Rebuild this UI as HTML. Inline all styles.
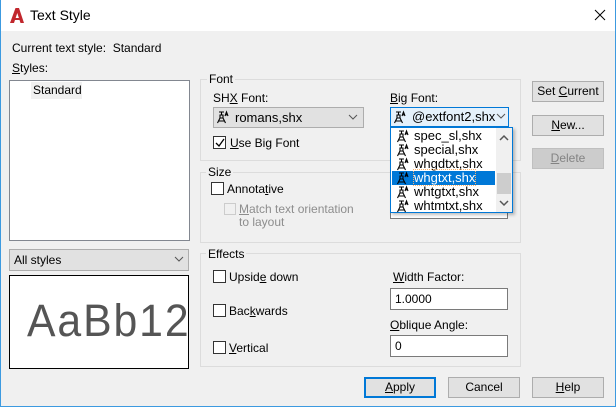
<!DOCTYPE html>
<html><head><style>
*{margin:0;padding:0;box-sizing:border-box}
body{width:616px;height:407px;background:#f0f0f0;font-family:"Liberation Sans",sans-serif;font-size:12px;color:#000;position:relative;overflow:hidden}
.a{position:absolute;white-space:nowrap}
.win{position:absolute;left:0;top:0;width:616px;height:407px;border:1px solid #3c9ae0;border-top:none}
.title{position:absolute;left:0;top:0;width:616px;height:31px;background:#fff}
.grp{position:absolute;border:1px solid #dcdcdc}
.gl{position:absolute;background:#f0f0f0;padding:0 2px;line-height:13px}
.btn{position:absolute;width:72px;height:21px;background:#e1e1e1;border:1px solid #adadad;text-align:center;line-height:19px}
.cb{position:absolute;width:13px;height:13px;border:1px solid #333;background:#fff}
.inp{position:absolute;width:118px;height:22px;border:1px solid #7a7a7a;background:#fff;padding-left:4px;line-height:20px}
.u{text-decoration:underline}
.it{position:absolute;left:1px;width:103px;height:14px;line-height:14px;font-size:13px;padding-left:22px}
.ic{position:absolute;left:4px;top:0}
</style></head><body>
<svg width="0" height="0" style="position:absolute"><defs><g id="ico" fill="none" stroke-width="1.1"><path d="M3 2h5M5.5 2v3M4 5h3v3h-3z M1.5 13l2.5-5M9.5 13l-2.5-5M3 11h5"/><path d="M9 6l1.5-4l1.5 4M9.5 4.8h2"/></g></defs></svg>
<div class="title"></div>
<div class="win"></div>
<svg class="a" style="left:9px;top:7px" width="16" height="17" viewBox="0 0 16 17"><path d="M1 16 L6.5 1 L10 1 L15 16 L11.5 16 L8.3 6 L5 16Z" fill="#c1272d"/><path d="M5.5 12 L11 12" stroke="#c1272d" stroke-width="2"/></svg>
<div class="a" style="left:30px;top:7px;font-size:14px">Text Style</div>
<svg class="a" style="left:594px;top:9px" width="12" height="12"><path d="M1 1L11 11M11 1L1 11" stroke="#000" stroke-width="1"/></svg>

<div class="a" style="left:12px;top:41px">Current text style:&nbsp; Standard</div>
<div class="a" style="left:12px;top:61px"><span class="u">S</span>tyles:</div>
<div class="a" style="left:9px;top:80px;width:181px;height:161px;background:#fff;border:1px solid #828790"></div>
<div class="a" style="left:31px;top:82px;width:51px;height:17px;background:#f0f0f0;line-height:17px;padding-left:2px">Standard</div>
<div class="a" style="left:9px;top:249px;width:180px;height:22px;background:#e1e1e1;border:1px solid #adadad;line-height:20px;padding-left:4px">All styles</div>
<svg class="a" style="left:174px;top:256px" width="10" height="7"><path d="M1 1L5 5L9 1" stroke="#555" fill="none"/></svg>
<div class="a" style="left:9px;top:275px;width:180px;height:94px;background:#fff;border:1px solid #000;overflow:hidden">
<div class="a" style="left:17px;top:19px;font-size:45px;color:#555;letter-spacing:2px;transform:scaleX(0.95);transform-origin:left">AaBb12</div></div>

<div class="grp" style="left:200px;top:79px;width:321px;height:82px"></div>
<div class="gl" style="left:207px;top:73px">Font</div>
<div class="a" style="left:213px;top:91px">SH<span class="u">X</span> Font:</div>
<div class="a" style="left:213px;top:107px;width:151px;height:21px;background:#e1e1e1;border:1px solid #adadad;line-height:19px;padding-left:21px;font-size:13px">romans,shx</div>
<svg class="a" style="left:216px;top:110px" width="14" height="14" stroke="#000"><use href="#ico"/></svg>
<svg class="a" style="left:348px;top:114px" width="10" height="7"><path d="M1 1L5 5L9 1" stroke="#555" fill="none"/></svg>
<div class="cb" style="left:213px;top:136px"></div>
<svg class="a" style="left:214px;top:137px" width="12" height="12"><path d="M2 6L5 9L10 2" stroke="#000" fill="none" stroke-width="1.3"/></svg>
<div class="a" style="left:230px;top:136px"><span class="u">U</span>se Big Font</div>
<div class="a" style="left:390px;top:91px"><span class="u">B</span>ig Font:</div>

<div class="grp" style="left:200px;top:172px;width:321px;height:71px"></div>
<div class="gl" style="left:206px;top:166px">Size</div>
<div class="cb" style="left:211px;top:182px"></div>
<div class="a" style="left:227px;top:182px">Annota<span class="u">t</span>ive</div>
<div class="a" style="left:224px;top:203px;width:12px;height:12px;border:1px solid #ccc;background:#f0f0f0"></div>
<div class="a" style="left:239px;top:203px;color:#8d8d8d;line-height:13px"><span class="u">M</span>atch text orientation<br>to layout</div>
<div class="inp" style="left:390px;top:198px;height:21px"></div>

<div class="grp" style="left:200px;top:253px;width:321px;height:114px"></div>
<div class="gl" style="left:206px;top:248px">Effects</div>
<div class="cb" style="left:213px;top:270px"></div>
<div class="a" style="left:229px;top:270px">Upsid<span class="u">e</span> down</div>
<div class="cb" style="left:213px;top:304px"></div>
<div class="a" style="left:229px;top:304px">Bac<span class="u">k</span>wards</div>
<div class="cb" style="left:213px;top:341px"></div>
<div class="a" style="left:229px;top:341px"><span class="u">V</span>ertical</div>
<div class="a" style="left:393px;top:270px"><span class="u">W</span>idth Factor:</div>
<div class="inp" style="left:390px;top:288px">1.0000</div>
<div class="a" style="left:390px;top:318px"><span class="u">O</span>blique Angle:</div>
<div class="inp" style="left:390px;top:335px">0</div>

<div class="btn" style="left:532px;top:81px">Set <span class="u">C</span>urrent</div>
<div class="btn" style="left:532px;top:115px"><span class="u">N</span>ew...</div>
<div class="btn" style="left:532px;top:148px;background:#cccccc;border-color:#bfbfbf;color:#838383"><span class="u">D</span>elete</div>
<div class="btn" style="left:364px;top:377px;border:2px solid #0078d7;line-height:17px"><span class="u">A</span>pply</div>
<div class="btn" style="left:448px;top:377px">Cancel</div>
<div class="btn" style="left:532px;top:377px"><span class="u">H</span>elp</div>

<div class="a" style="left:390px;top:107px;width:119px;height:20px;background:#e5f1fb;border:1px solid #0078d7;line-height:18px;padding-left:21px;font-size:13px">@extfont2,shx</div>
<svg class="a" style="left:393px;top:110px" width="14" height="14" stroke="#000"><use href="#ico"/></svg>
<svg class="a" style="left:496px;top:113px" width="10" height="7"><path d="M1 1L5 5L9 1" stroke="#555" fill="none"/></svg>

<div class="a" style="left:390px;top:127px;width:123px;height:86px;background:#fff;border:1px solid #0078d7;box-shadow:2px 2px 3px rgba(0,0,0,.25)">
<div class="it" style="top:1px"><svg class="ic" width="14" height="14" stroke="#000"><use href="#ico"/></svg>spec_sl,shx</div>
<div class="it" style="top:15px"><svg class="ic" width="14" height="14" stroke="#000"><use href="#ico"/></svg>special,shx</div>
<div class="it" style="top:29px"><svg class="ic" width="14" height="14" stroke="#000"><use href="#ico"/></svg>whgdtxt,shx</div>
<div class="it" style="top:43px;background:#0078d7;color:#fff"><svg class="ic" width="14" height="14" stroke="#000"><use href="#ico"/></svg><span style="outline:1px dotted #ffb36b">whgtxt,shx</span></div>
<div class="it" style="top:57px"><svg class="ic" width="14" height="14" stroke="#000"><use href="#ico"/></svg>whtgtxt,shx</div>
<div class="it" style="top:71px"><svg class="ic" width="14" height="14" stroke="#000"><use href="#ico"/></svg>whtmtxt,shx</div>
<div class="a" style="left:105px;top:0;width:16px;height:84px;background:#f0f0f0"></div>
<div class="a" style="left:106px;top:45px;width:14px;height:21px;background:#cdcdcd"></div>
<svg class="a" style="left:108px;top:6px" width="10" height="7"><path d="M1 6L5 2L9 6" stroke="#555" fill="none" stroke-width="1.5"/></svg>
<svg class="a" style="left:108px;top:72px" width="10" height="7"><path d="M1 1L5 5L9 1" stroke="#555" fill="none" stroke-width="1.5"/></svg>
</div>
</body></html>
